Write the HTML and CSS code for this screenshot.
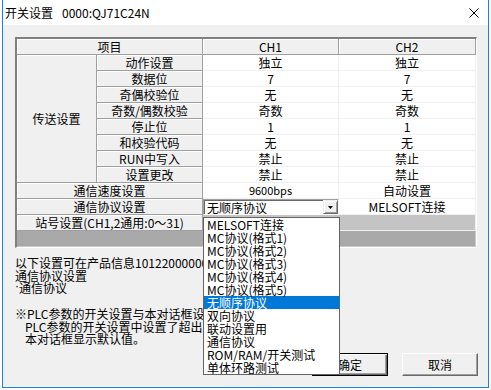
FILE: index.html
```html
<!DOCTYPE html>
<html lang="zh-CN">
<head>
    <meta charset="UTF-8">
    <title>开关设置</title>
    <link rel="stylesheet" href="styles.css">
</head>
<body>
    <div class="window">
        <div class="titlebar">
            <span>开关设置</span><span class="title-id">0000:QJ71C24N</span>
            <svg class="close" width="10" height="10" viewBox="0 0 10 10">
                <path d="M0.5 0.5 L9.5 9.5 M9.5 0.5 L0.5 9.5" stroke="#000" stroke-width="1" fill="none"/>
            </svg>
        </div>
        <div class="client">
            <div class="grid">
                <div class="hd span2">项目</div>
                <div class="hd">CH1</div>
                <div class="hd">CH2</div>

                <div class="hd group">传送设置</div>
                <div class="hd">动作设置</div><div class="cell">独立</div><div class="cell">独立</div>
                <div class="hd">数据位</div><div class="cell">7</div><div class="cell">7</div>
                <div class="hd">奇偶校验位</div><div class="cell">无</div><div class="cell">无</div>
                <div class="hd">奇数/偶数校验</div><div class="cell">奇数</div><div class="cell">奇数</div>
                <div class="hd">停止位</div><div class="cell">1</div><div class="cell">1</div>
                <div class="hd">和校验代码</div><div class="cell">无</div><div class="cell">无</div>
                <div class="hd">RUN中写入</div><div class="cell">禁止</div><div class="cell">禁止</div>
                <div class="hd">设置更改</div><div class="cell">禁止</div><div class="cell">禁止</div>

                <div class="hd span2">通信速度设置</div>
                <div class="cell small">9600bps</div><div class="cell">自动设置</div>

                <div class="hd span2">通信协议设置</div>
                <div class="cell combo-cell">
                    <div class="combo">
                        <span>无顺序协议</span>
                        <span class="combo-btn">
                            <svg width="5" height="3" viewBox="0 0 5 3"><polygon points="0,0 5,0 2.5,3" fill="#000"/></svg>
                        </span>
                    </div>
                </div>
                <div class="cell">MELSOFT连接</div>

                <div class="hd span2">站号设置(CH1,2通用:0～31)</div>
                <div class="cell gray span2"></div>

                <div class="cell bar"></div>
            </div>

            <div class="notes">
                <div>以下设置可在产品信息10122000000000以后的模块中使用。</div>
                <div>通信协议设置</div>
                <div><span class="dot">·</span>通信协议</div>
                <div>&nbsp;</div>
                <div>※PLC参数的开关设置与本对话框设置不同时，</div>
                <div class="indent">PLC参数的开关设置中设置了超出范围的值时，</div>
                <div class="indent">本对话框显示默认值。</div>
            </div>

            <div class="buttons">
                <button class="default">确定</button>
                <button>取消</button>
            </div>
        </div>

        <ul class="droplist">
            <li>MELSOFT连接</li>
            <li>MC协议(格式1)</li>
            <li>MC协议(格式2)</li>
            <li>MC协议(格式3)</li>
            <li>MC协议(格式4)</li>
            <li>MC协议(格式5)</li>
            <li class="sel">无顺序协议</li>
            <li>双向协议</li>
            <li>联动设置用</li>
            <li>通信协议</li>
            <li>ROM/RAM/开关测试</li>
            <li>单体环路测试</li>
        </ul>
    </div>
</body>
</html>
```

FILE: styles.css
```css
body {
    margin: 0;
    background: #fff;
    font-family: "Noto Sans CJK SC", sans-serif;
    font-size: 12px;
    color: #000;
}
.window {
    position: relative;
    margin-left: 2px;
    width: 487px;
    box-sizing: border-box;
    border: 1px solid #1883d7;
    border-top: 0;
    background: #f0f0f0;
}
.titlebar {
    height: 25px;
    background: #fff;
    display: flex;
    align-items: center;
    padding: 0 9px 0 2px;
}
.title-id {
    margin-left: 9px;
}
.close {
    margin-left: auto;
}
.client {
    height: 362px;
    box-sizing: border-box;
    padding: 12px 10px 11px 12px;
    display: flex;
    flex-direction: column;
    align-items: flex-start;
}

/* settings grid */
.grid {
    display: grid;
    grid-template-columns: 80px 106px 136px 137px;
    grid-auto-rows: 16px;
    border-top: 2px solid #808080;
    border-left: 2px solid #808080;
    border-right: 1px solid #fff;
    border-bottom: 1px solid #fff;
    background: #fff;
    line-height: 15px;
}
.hd, .cell {
    box-sizing: border-box;
    display: flex;
    align-items: center;
    justify-content: center;
    white-space: nowrap;
}
.hd {
    background: #f0f0f0;
    border-right: 1px solid #a0a0a0;
    border-bottom: 1px solid #a0a0a0;
    box-shadow: inset 1px 1px 0 #fff;
}
.cell {
    background: #fff;
    border-right: 1px solid #f0f0f0;
    border-bottom: 1px solid #f0f0f0;
}
.span2 {
    grid-column: span 2;
}
.group {
    grid-row: span 8;
}
.small {
    font-size: 11px;
}
.gray {
    background: #c4c4c4;
}
.bar {
    grid-column: 1 / -1;
    background: #a9a9a9;
    border-color: #c8c8c8;
}
.combo-cell {
    display: block;
    border: 0;
}
.combo {
    height: 16px;
    margin-bottom: -1px;
    box-sizing: border-box;
    display: flex;
    align-items: center;
    padding-left: 3px;
    background: #fff;
    border: 1px solid;
    border-color: #a0a0a0 #fff #fff #a0a0a0;
    box-shadow: inset 1px 1px 0 #696969;
}
.combo-btn {
    margin-left: auto;
    width: 15px;
    height: 14px;
    box-sizing: border-box;
    display: flex;
    align-items: center;
    justify-content: center;
    background: #f0f0f0;
    border: 1px solid;
    border-color: #f0f0f0 #696969 #696969 #f0f0f0;
    box-shadow: inset 1px 1px 0 #fff, inset -1px -1px 0 #a0a0a0;
}

/* notes under the grid */
.notes {
    margin-top: 9px;
    width: 324px;
    overflow: hidden;
    white-space: nowrap;
    line-height: 12.5px;
}
.notes .dot {
    font-family: "Liberation Sans", sans-serif;
    position: relative;
    top: -3px;
}
.indent {
    padding-left: 10px;
}

.buttons {
    margin-top: auto;
    align-self: stretch;
    display: flex;
    justify-content: flex-end;
    gap: 14px;
}
.buttons button {
    width: 76px;
    height: 23px;
    padding: 0;
    font: inherit;
    color: #000;
    background: #f0f0f0;
    border: 1px solid;
    border-color: #fff #696969 #696969 #fff;
    box-shadow: inset -1px -1px 0 #a0a0a0;
}
.buttons button.default {
    border-color: #000;
    box-shadow: inset 1px 1px 0 #fff, inset -1px -1px 0 #696969, inset -2px -2px 0 #a0a0a0;
}

/* open dropdown of the protocol combo */
.droplist {
    position: absolute;
    left: 200px;
    top: 217px;
    width: 137px;
    box-sizing: border-box;
    margin: 0;
    padding: 0;
    list-style: none;
    background: #fff;
    border: 1px solid #646464;
}
.droplist li {
    height: 13px;
    line-height: 13px;
    padding-left: 3px;
    white-space: nowrap;
}
.droplist .sel {
    background: #0078d7;
    color: #fff;
}
```
